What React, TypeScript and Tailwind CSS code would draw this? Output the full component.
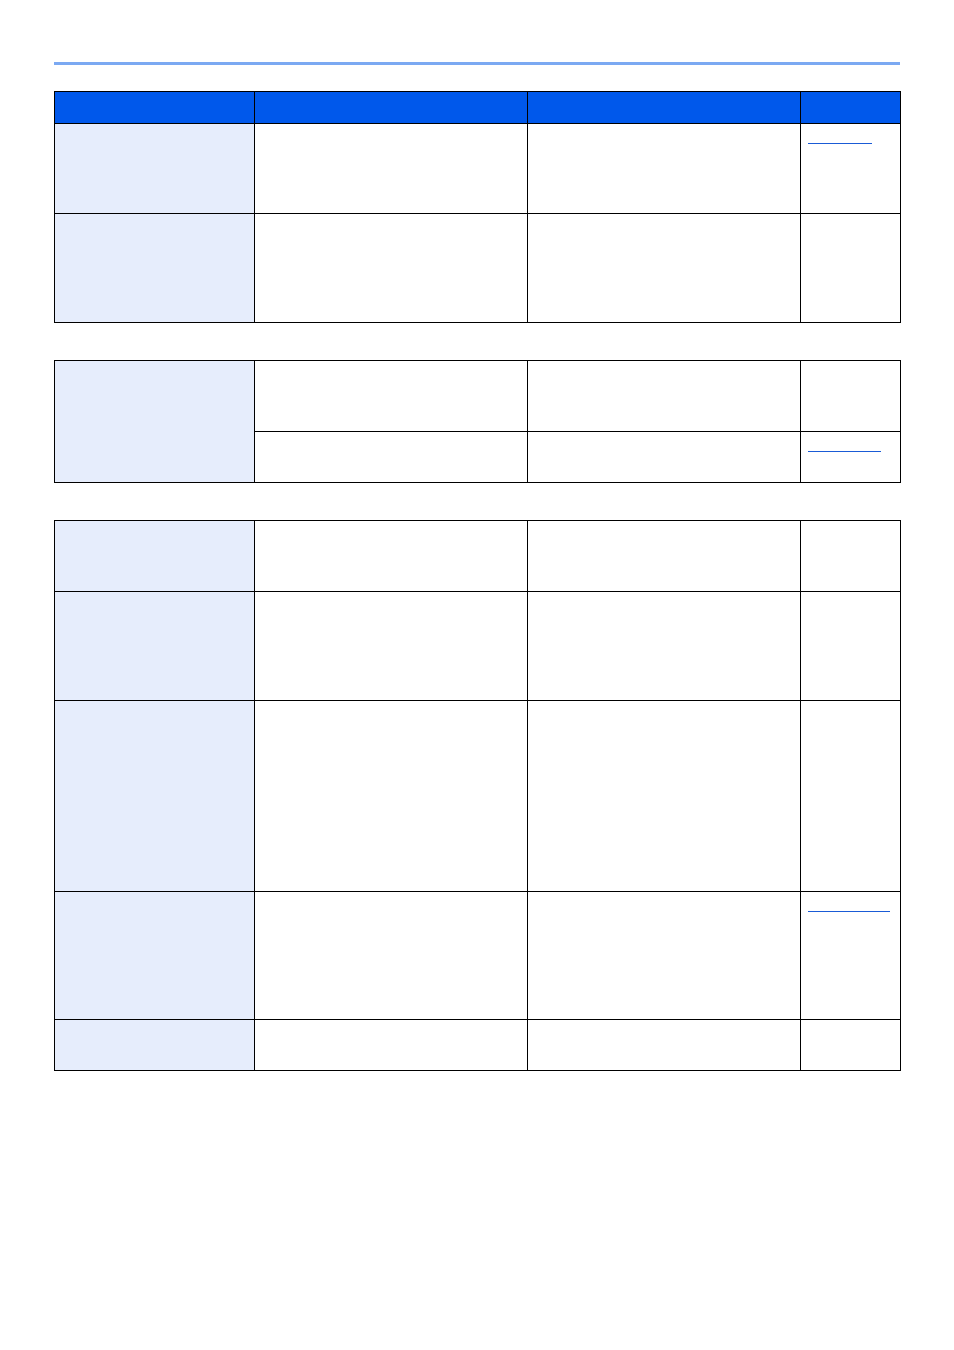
const border = 'border-black';

type Row = { h: string; link?: string };

function Link({ w }: { w: string }) {
  return <div className={`h-px bg-[#1a5bd6] ${w}`} />;
}

function PlainRow({ row }: { row: Row }) {
  return (
    <div className={`flex ${row.h}`}>
      <div className={`w-[200px] border-l border-t ${border} bg-[#e6edfc]`} />
      <div className={`w-[273px] border-l border-t ${border}`} />
      <div className={`w-[273px] border-l border-t ${border}`} />
      <div className={`w-[100px] border-l border-t ${border} pl-[7px]`}>
        {row.link && <div className={row.link.split(' ')[0]}><Link w={row.link.split(' ')[1]} /></div>}
      </div>
    </div>
  );
}

export default function App() {
  return (
    <div className="w-[954px] h-[1350px] bg-white" style={{ fontFamily: '"Liberation Sans", Arial, sans-serif' }}>
      <div className="pt-[62px] px-[54px]">
        <div className="h-[3px] w-[846px] bg-[#7ba9f2]" />
      </div>

      <div className="ml-[54px] mt-[26px] w-[847px] border-r border-b border-black">
        <div className="flex h-[32px]">
          <div className="w-[200px] border-l border-t border-black bg-[#0058eb]" />
          <div className="w-[273px] border-l border-t border-black bg-[#0058eb]" />
          <div className="w-[273px] border-l border-t border-black bg-[#0058eb]" />
          <div className="w-[100px] border-l border-t border-black bg-[#0058eb]" />
        </div>
        <PlainRow row={{ h: 'h-[90px]', link: 'pt-[19px] w-[64px]' }} />
        <PlainRow row={{ h: 'h-[109px]' }} />
      </div>

      <div className="ml-[54px] mt-[37px] w-[847px] border-r border-b border-black flex">
        <div className="w-[200px] border-l border-t border-black bg-[#e6edfc]" />
        <div className="flex flex-col">
          <div className="flex h-[71px]">
            <div className="w-[273px] border-l border-t border-black" />
            <div className="w-[273px] border-l border-t border-black" />
            <div className="w-[100px] border-l border-t border-black" />
          </div>
          <div className="flex h-[51px]">
            <div className="w-[273px] border-l border-t border-black" />
            <div className="w-[273px] border-l border-t border-black" />
            <div className="w-[100px] border-l border-t border-black pl-[7px] pt-[19px]">
              <Link w="w-[73px]" />
            </div>
          </div>
        </div>
      </div>

      <div className="ml-[54px] mt-[37px] w-[847px] border-r border-b border-black">
        <PlainRow row={{ h: 'h-[71px]' }} />
        <PlainRow row={{ h: 'h-[109px]' }} />
        <PlainRow row={{ h: 'h-[191px]' }} />
        <PlainRow row={{ h: 'h-[128px]', link: 'pt-[19px] w-[82px]' }} />
        <PlainRow row={{ h: 'h-[51px]' }} />
      </div>
    </div>
  );
}
